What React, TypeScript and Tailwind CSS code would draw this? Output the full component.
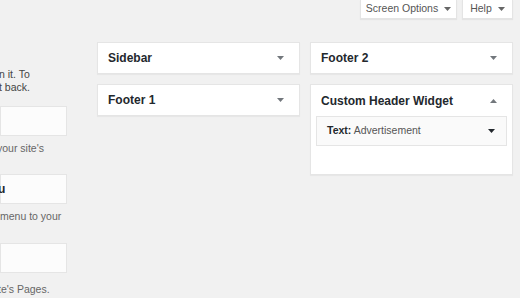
const font = { fontFamily: '"Liberation Sans", Arial, sans-serif' };

function Caret({ up = false, className = "" }: { up?: boolean; className?: string }) {
  return (
    <svg width="7" height="4" viewBox="0 0 7 4" className={className}>
      <polygon points={up ? "0,4 7,4 3.5,0" : "0,0 7,0 3.5,4"} fill="currentColor" />
    </svg>
  );
}

function TopButton({ label, width }: { label: string; width: string }) {
  return (
    <button
      type="button"
      className={`flex h-[19px] items-center justify-center gap-[6px] border border-t-0 border-[#e4e4e4] bg-white text-[10.5px] text-[#555] shadow-[0_1px_1px_rgba(0,0,0,0.05)] ${width}`}
    >
      {label}
      <Caret className="text-[#666]" />
    </button>
  );
}

function SidebarCard({ title }: { title: string }) {
  return (
    <div className="flex h-[32px] items-center justify-between border border-[#e5e5e5] bg-white pl-[10px] pr-[15px] shadow-[0_1px_1px_rgba(0,0,0,0.04)]">
      <span className="text-[12px] font-semibold text-[#23282d]">{title}</span>
      <Caret className="text-[#72777c]" />
    </div>
  );
}

function LeftBox({ children }: { children?: React.ReactNode }) {
  return (
    <div className="flex h-[30px] items-center border border-[#e5e5e5] bg-[#fcfcfc] text-[12px] font-semibold text-[#23282d]">
      {children}
    </div>
  );
}

export default function App() {
  return (
    <div style={font} className="h-[298px] w-[520px] overflow-hidden bg-[#f1f1f1]">
      <div className="flex justify-end gap-[5px] pr-[7px]">
        <TopButton label="Screen Options" width="w-[97px]" />
        <TopButton label="Help" width="w-[51px]" />
      </div>

      <div className="mt-[23px] flex">
        {/* available widgets, cut off on the left */}
        <div className="w-[67px] overflow-hidden text-[10.5px] leading-[13px]">
          <div className="mt-[26px] whitespace-nowrap text-[#444]">
            <div className="-ml-[1px]">n it. To</div>
            <div className="-ml-[1px]">t back.</div>
          </div>
          <div className="mt-[12px]">
            <LeftBox />
          </div>
          <div className="mt-[6px] h-[26px] whitespace-nowrap text-[#666]">
            <div className="-ml-[3px]">your site's</div>
          </div>
          <div className="mt-[6px]">
            <LeftBox>
              <span className="-ml-[3px]">u</span>
            </LeftBox>
          </div>
          <div className="mt-[6px] h-[26px] whitespace-nowrap text-[#666]">
            <div>menu to your</div>
          </div>
          <div className="mt-[7px]">
            <LeftBox />
          </div>
          <div className="mt-[10px] whitespace-nowrap text-[#666]">
            <div className="-ml-[2px]">te's Pages.</div>
          </div>
        </div>

        <div className="ml-[30px] flex w-[203px] flex-col gap-[10px]">
          <SidebarCard title="Sidebar" />
          <SidebarCard title="Footer 1" />
        </div>

        <div className="ml-[10px] flex w-[203px] flex-col gap-[10px]">
          <SidebarCard title="Footer 2" />
          <div className="border border-[#e5e5e5] bg-white pb-[28px] shadow-[0_1px_1px_rgba(0,0,0,0.04)]">
            <div className="flex h-[31px] items-center justify-between pl-[10px] pr-[15px]">
              <span className="text-[12px] font-semibold text-[#23282d]">Custom Header Widget</span>
              <Caret up className="text-[#72777c]" />
            </div>
            <div className="mx-[5px] flex h-[30px] items-center justify-between border border-[#e5e5e5] bg-[#fafafa] pl-[10px] pr-[11px]">
              <span className="text-[10.5px] text-[#555]">
                <span className="font-semibold text-[#23282d]">Text:</span> Advertisement
              </span>
              <Caret className="text-[#23282d]" />
            </div>
          </div>
        </div>
      </div>
    </div>
  );
}
